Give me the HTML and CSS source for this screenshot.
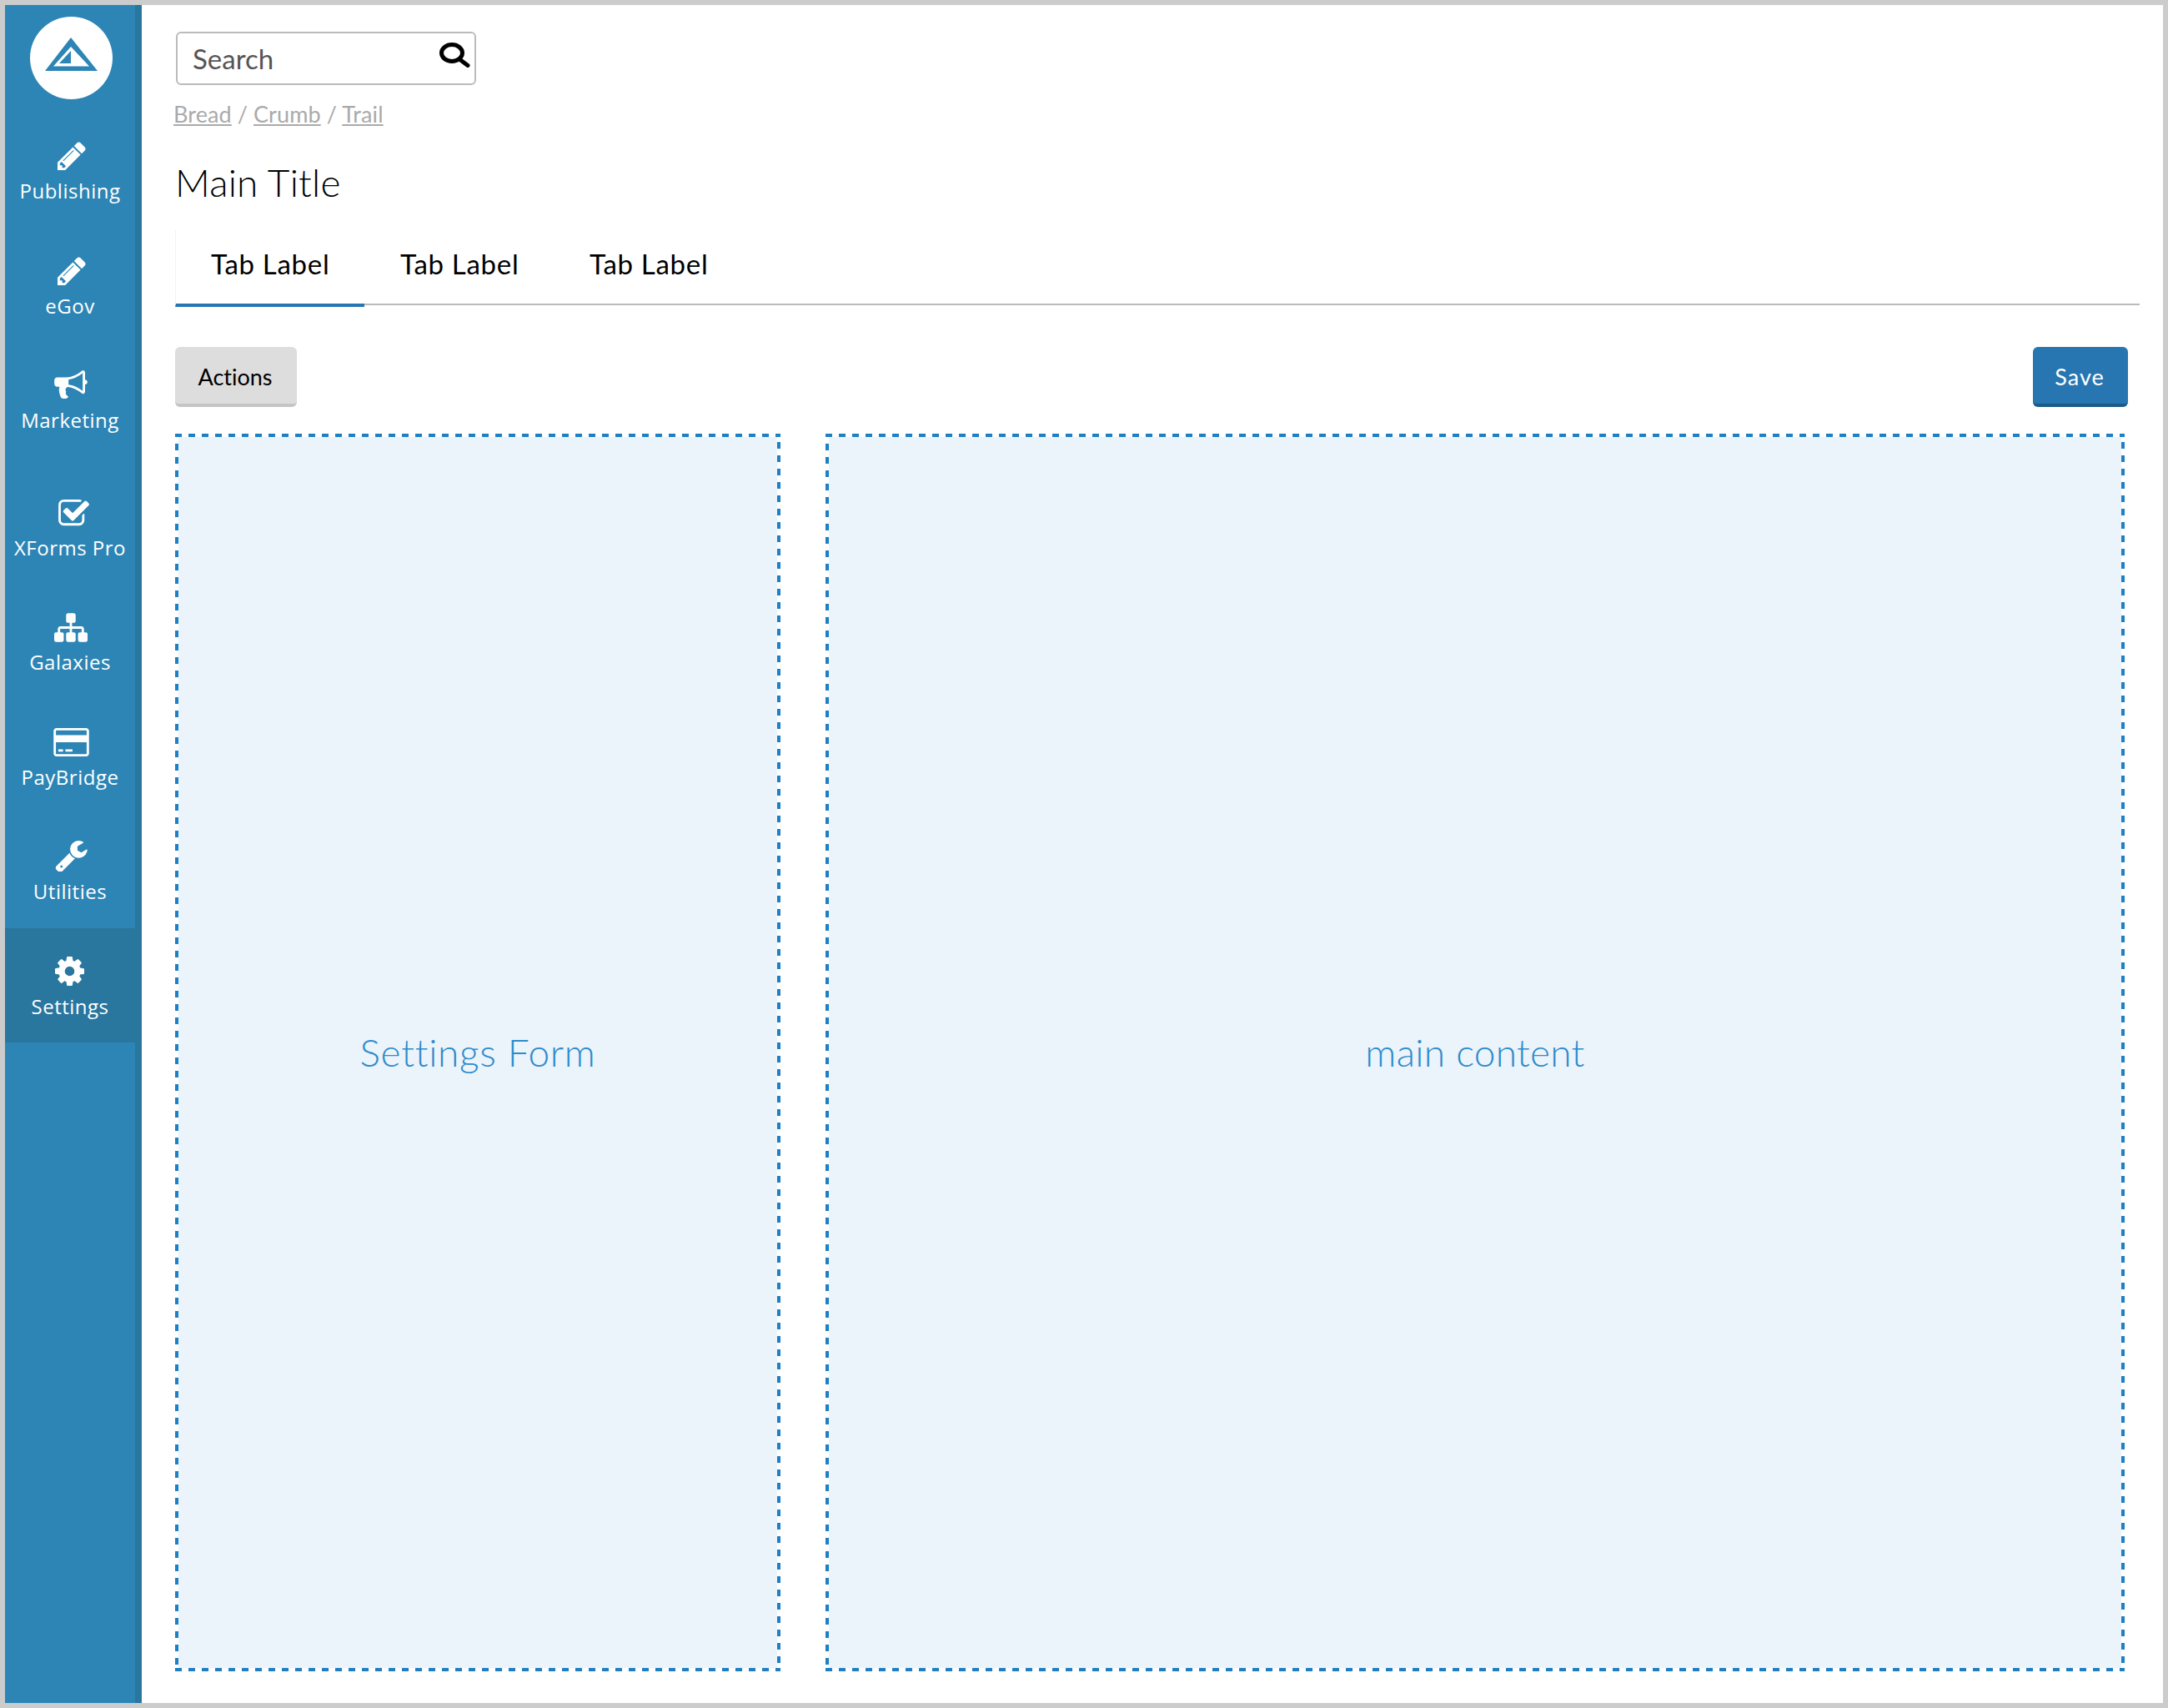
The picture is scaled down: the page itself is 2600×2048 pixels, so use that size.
FILE: index.html
```html
<!DOCTYPE html>
<html>

	<head>
		<meta charset="UTF-8">
		<title>Main Title</title>
		<link rel="stylesheet" href="styles.css">
	</head>

	<body>
		<div class="frame">
			<!--left navigation-->
			<div class="sidebar">
				<div class="logo">
					<svg class="logo-mark" viewBox="0 0 99 99">
						<path fill="#2d85b5" d="M49 25 L18 65 H81 Z" />
						<path fill="#fff" d="M49 36 L28 59.500 H71 Z" />
						<path fill="#2d85b5" d="M49 41 L35 56 H49 Z" />
					</svg>
				</div>
				<a class="nav-item" href="#">
					<span class="nav-icon"><svg class="icon-pencil" viewBox="128 128 1536 1536"><path d="M491 1536l91-91-235-235-91 91v107h128v128h107zm523-928q0-22-22-22-10 0-17 7l-542 542q-7 7-7 17 0 22 22 22 10 0 17-7l542-542q7-7 7-17zm-54-192l416 416-832 832h-416v-416zm683 96q0 53-37 90l-166 166-416-416 166-165q36-38 90-38 53 0 91 38l235 234q37 39 37 91z"/></svg></span>
					<span class="nav-label">Publishing</span>
				</a>
				<a class="nav-item" href="#">
					<span class="nav-icon"><svg class="icon-pencil" viewBox="128 128 1536 1536"><path d="M491 1536l91-91-235-235-91 91v107h128v128h107zm523-928q0-22-22-22-10 0-17 7l-542 542q-7 7-7 17 0 22 22 22 10 0 17-7l542-542q7-7 7-17zm-54-192l416 416-832 832h-416v-416zm683 96q0 53-37 90l-166 166-416-416 166-165q36-38 90-38 53 0 91 38l235 234q37 39 37 91z"/></svg></span>
					<span class="nav-label">eGov</span>
				</a>
				<a class="nav-item nav-item-gap" href="#">
					<span class="nav-icon"><svg class="icon-bullhorn" viewBox="0 128 1792 1536"><path d="M1664 640q53 0 90.500 37.500t37.500 90.500-37.500 90.500-90.500 37.500v384q0 52-38 90t-90 38q-417-347-812-380-58 19-91 66t-31 100.500 40 92.500q-20 33-23 65.500t6 58 33.500 55 48 50 61.500 50.500q-29 58-111.500 83t-168.500 11.500-132-55.500q-7-23-29.500-87.500t-32-94.500-23-89-15-101 3.500-98.500 22-110.500h-122q-66 0-113-47t-47-113v-192q0-66 47-113t113-47h480q435 0 896-384 52 0 90 38t38 90v384zm-128 604v-954q-394 302-768 343v270q377 42 768 341z"/></svg></span>
					<span class="nav-label">Marketing</span>
				</a>
				<a class="nav-item" href="#">
					<span class="nav-icon"><svg class="icon-check" viewBox="64 128 1664 1536"><path d="M1472 930v318q0 119-84.500 203.500t-203.500 84.500h-832q-119 0-203.500-84.500t-84.500-203.500v-832q0-119 84.500-203.500t203.500-84.500h832q63 0 117 25 15 7 18 23 3 17-9 29l-49 49q-10 10-23 10-3 0-9-2-23-6-45-6h-832q-66 0-113 47t-47 113v832q0 66 47 113t113 47h832q66 0 113-47t47-113v-254q0-13 9-22l64-64q10-10 23-10 6 0 12 3 20 8 20 29zm231-489l-814 814q-24 24-57 24t-57-24l-430-430q-24-24-24-57t24-57l110-110q24-24 57-24t57 24l263 263 647-647q24-24 57-24t57 24l110 110q24 24 24 57t-24 57z"/></svg></span>
					<span class="nav-label">XForms Pro</span>
				</a>
				<a class="nav-item" href="#">
					<span class="nav-icon"><svg class="icon-sitemap" viewBox="0 128 1792 1536"><path d="M1792 1248v320q0 40-28 68t-68 28h-320q-40 0-68-28t-28-68v-320q0-40 28-68t68-28h96v-192h-512v192h96q40 0 68 28t28 68v320q0 40-28 68t-68 28h-320q-40 0-68-28t-28-68v-320q0-40 28-68t68-28h96v-192h-512v192h96q40 0 68 28t28 68v320q0 40-28 68t-68 28h-320q-40 0-68-28t-28-68v-320q0-40 28-68t68-28h96v-192q0-52 38-90t90-38h512v-192h-96q-40 0-68-28t-28-68v-320q0-40 28-68t68-28h320q40 0 68 28t28 68v320q0 40-28 68t-68 28h-96v192h512q52 0 90 38t38 90v192h96q40 0 68 28t28 68z"/></svg></span>
					<span class="nav-label">Galaxies</span>
				</a>
				<a class="nav-item" href="#">
					<span class="nav-icon"><svg class="icon-card" viewBox="0 128 1920 1536"><path d="M1760 128q66 0 113 47t47 113v1216q0 66-47 113t-113 47h-1600q-66 0-113-47t-47-113v-1216q0-66 47-113t113-47h1600zm-1600 128q-13 0-22.500 9.500t-9.500 22.500v224h1664v-224q0-13-9.500-22.500t-22.500-9.500h-1600zm1600 1280q13 0 22.500-9.500t9.500-22.500v-608h-1664v608q0 13 9.500 22.500t22.500 9.500h1600zm-1504-128v-128h256v128h-256zm384 0v-128h384v128h-384z"/></svg></span>
					<span class="nav-label">PayBridge</span>
				</a>
				<a class="nav-item" href="#">
					<span class="nav-icon"><svg class="icon-wrench" viewBox="64 128 1664 1600"><path d="M448 1472q0-26-19-45t-45-19-45 19-19 45 19 45 45 19 45-19 19-45zm644-420l-682 682q-37 37-90 37-52 0-91-37l-106-108q-38-36-38-90 0-53 38-91l681-681q39 98 114.500 173.500t173.500 114.500zm634-435q0 39-23 106-47 134-164.500 217.500t-258.500 83.500q-185 0-316.500-131.500t-131.500-316.500 131.500-316.500 316.500-131.500q58 0 121.500 16.500t107.500 46.500q16 11 16 28t-16 28l-293 169v224l193 107q5-3 79-48.500t135.500-81 70.500-35.500q15 0 23.500 10t8.500 25z"/></svg></span>
					<span class="nav-label">Utilities</span>
				</a>
				<a class="nav-item active" href="#">
					<span class="nav-icon"><svg class="icon-cog" viewBox="128 128 1536 1536"><path d="M1152 896q0-106-75-181t-181-75-181 75-75 181 75 181 181 75 181-75 75-181zm512-109v222q0 12-8 23t-20 13l-185 28q-19 54-39 91 35 50 107 138 10 12 10 25t-9 23q-27 37-99 108t-94 71q-12 0-26-9l-138-108q-44 23-91 38-16 136-29 186-7 28-36 28h-222q-14 0-24.500-8.500t-11.500-21.500l-28-184q-49-16-90-37l-141 107q-10 9-25 9-14 0-25-11-126-114-165-168-7-10-7-23 0-12 8-23 15-21 51-66.500t54-70.500q-27-50-41-99l-183-27q-13-2-21-12.500t-8-23.500v-222q0-12 8-23t19-13l186-28q14-46 39-92-40-57-107-138-10-12-10-24 0-10 9-23 26-36 98.500-107.500t94.500-71.500q13 0 26 10l138 107q44-23 91-38 16-136 29-186 7-28 36-28h222q14 0 24.500 8.500t11.500 21.500l28 184q49 16 90 37l142-107q9-9 24-9 13 0 25 10 129 119 165 170 7 8 7 22 0 12-8 23-15 21-51 66.500t-54 70.500q26 50 41 98l183 28q13 2 21 12.500t8 23.500z"/></svg></span>
					<span class="nav-label">Settings</span>
				</a>
			</div>

			<!--main area-->
			<div class="main">
				<div class="search">
					<span class="search-text">Search</span>
					<svg class="search-icon" viewBox="0 0 37 30">
						<ellipse cx="15" cy="12.500" rx="12.500" ry="10" fill="none" stroke="#000" stroke-width="5" />
						<path d="M24 20 L34 27.500" stroke="#000" stroke-width="5" stroke-linecap="round" />
					</svg>
				</div>
				<div class="crumbs">
					<a href="#">Bread</a> / <a href="#">Crumb</a> / <a href="#">Trail</a>
				</div>
				<h1 class="title">Main Title</h1>
				<div class="tabs">
					<a class="tab active" href="#">Tab Label</a>
					<a class="tab" href="#">Tab Label</a>
					<a class="tab" href="#">Tab Label</a>
				</div>
				<div class="toolbar">
					<a class="btn" href="#">Actions</a>
					<a class="btn btn-primary" href="#">Save</a>
				</div>
				<div class="panels">
					<div class="panel panel-form">Settings Form</div>
					<div class="panel">main content</div>
				</div>
			</div>
		</div>
	</body>

</html>
```

FILE: styles.css
```css
* {
	margin: 0;
	padding: 0;
	box-sizing: border-box;
}

body {
	width: 2600px;
	height: 2048px;
	font-family: "Lato", "Liberation Sans", sans-serif;
	font-variant-ligatures: none;
	background: #fff;
}

a {
	text-decoration: none;
	color: inherit;
}

.frame {
	display: flex;
	width: 2600px;
	height: 2048px;
	border: 6px solid #ccc;
}

/*left navigation*/

.sidebar {
	flex: 0 0 164px;
	background: #2d85b5;
	border-right: 8px solid #29769f;
}

.logo {
	height: 129px;
	padding: 14px 0 0 30px;
}

.logo-mark {
	display: block;
	width: 99px;
	height: 99px;
	background: #fff;
	border-radius: 50%;
}

.nav-item {
	display: flex;
	flex-direction: column;
	align-items: center;
	height: 137.5px;
	padding-top: 32px;
	color: #fff;
}

.nav-item-gap {
	margin-bottom: 15px;
}

.nav-item.active {
	margin-right: -8px;
	padding-right: 8px;
	background: #29769f;
}

.nav-icon {
	display: flex;
	align-items: center;
	justify-content: center;
	height: 40px;
}

.nav-icon svg {
	display: block;
	fill: #fff;
}

.icon-pencil {
	width: 34px;
	height: 34px;
	margin-left: 4px;
}

.icon-bullhorn {
	width: 40px;
	height: 34px;
	margin: -3px 0 0 2px;
}

.icon-check {
	width: 37px;
	height: 34px;
	margin: 2px 0 0 8px;
}

.icon-sitemap {
	width: 40px;
	height: 35px;
	margin-left: 2px;
}

.icon-card {
	width: 43px;
	height: 34px;
	margin-left: 2px;
}

.icon-wrench {
	width: 39px;
	height: 37px;
	margin: -2px 0 0 3px;
}

.icon-cog {
	width: 35px;
	height: 35px;
	margin-left: -1px;
}

.nav-label {
	margin-top: 5px;
	font-family: "Open Sans", sans-serif;
	font-size: 24px;
	line-height: 34px;
	letter-spacing: 0.5px;
	white-space: nowrap;
}

/*main area*/

.main {
	flex: 1;
	min-width: 0;
	padding: 32px 28px 38px 40px;
	display: flex;
	flex-direction: column;
}

.search {
	display: flex;
	align-items: center;
	justify-content: space-between;
	width: 360px;
	height: 64px;
	margin-left: 1px;
	padding: 0 5px 0 18px;
	border: 2px solid #bbb;
	border-radius: 6px;
}

.search-text {
	font-size: 33px;
	color: #555;
}

.search-icon {
	display: block;
	width: 37px;
	height: 30px;
	margin-top: -8px;
}

.crumbs {
	margin: 15px 0 0 -2px;
	font-size: 27px;
	line-height: 40px;
	letter-spacing: 0.1px;
	color: #aaa;
}

.crumbs a {
	text-decoration: underline;
}

.title {
	margin: 33px 0 0 0;
	font-size: 46px;
	line-height: 58px;
	font-weight: 300;
	letter-spacing: 0.2px;
	color: #000;
}

.tabs {
	display: flex;
	align-items: flex-start;
	height: 90px;
	margin-top: 28px;
	border-bottom: 2px solid #bbb;
}

.tab {
	width: 227px;
	height: 92px;
	padding: 18px 0 0 43px;
	font-size: 33px;
	line-height: 44px;
	letter-spacing: 0.7px;
	color: #000;
}

.tab.active {
	padding-left: 42px;
	border-left: 1px solid #eef3f8;
	border-bottom: 4px solid #2776b1;
}

.toolbar {
	display: flex;
	justify-content: space-between;
	margin-top: 50px;
	padding-right: 14px;
}

.btn {
	display: block;
	width: 146px;
	height: 72px;
	padding-right: 2px;
	font-size: 27px;
	line-height: 72px;
	text-align: center;
	color: #000;
	background: #ddd;
	border-bottom: 4px solid #c5c5c5;
	border-radius: 6px;
}

.btn-primary {
	width: 114px;
	letter-spacing: 1px;
	color: #fff;
	background: #2776b1;
	border-bottom-color: #1d5a88;
}

.panels {
	flex: 1;
	display: grid;
	grid-template-columns: 726px 1fr;
	gap: 54px;
	margin-top: 32px;
	padding-right: 18px;
}

/*drawn by hand, the browser's own dashed border has shorter gaps*/
.panel {
	display: flex;
	align-items: center;
	justify-content: center;
	padding-bottom: 2px;
	font-size: 46px;
	font-weight: 300;
	letter-spacing: 0.3px;
	color: #2d8bcb;
	background-color: #ebf3fb;
	background-image:
		linear-gradient(90deg, #1e80c3 50%, #fff 50%),
		linear-gradient(90deg, #1e80c3 50%, #fff 50%),
		linear-gradient(180deg, #1e80c3 50%, #fff 50%),
		linear-gradient(180deg, #1e80c3 50%, #fff 50%);
	background-size: 16px 4px, 16px 4px, 4px 16px, 4px 16px;
	background-position: 0 0, 0 100%, 0 12px, 100% 10px;
	background-repeat: repeat-x, repeat-x, repeat-y, repeat-y;
}

.panel-form {
	letter-spacing: 0.7px;
}
```
